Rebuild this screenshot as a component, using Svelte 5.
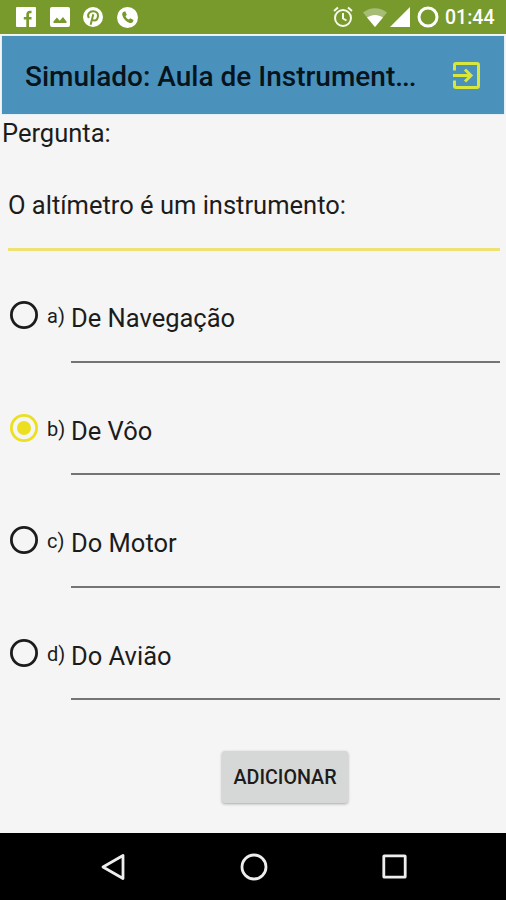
<script lang="ts">
  type Option = {
    key: string;
    text: string;
  };

  const options: Option[] = [
    { key: 'a', text: 'De Navegação' },
    { key: 'b', text: 'De Vôo' },
    { key: 'c', text: 'Do Motor' },
    { key: 'd', text: 'Do Avião' }
  ];

  let selected = $state('b');
</script>

<div class="screen">
  <header class="status">
    <div class="notifications">
      <svg width="20" height="20" viewBox="0 0 20 20" aria-hidden="true">
        <rect width="20" height="20" rx="1" fill="#fff" />
        <path d="M10.300 20v-7.500H7.800V9.900h2.500V7.500c0-2.400 1.300-3.800 3.600-3.800h1.600v2.500h-1.200c-1 0-1.300.4-1.300 1.400v2.300h2.500v2.600H13V20z" fill="#789a2c" />
      </svg>
      <svg width="20" height="20" viewBox="0 0 20 20" aria-hidden="true">
        <rect width="20" height="20" rx="2" fill="#fff" />
        <path d="M3.500 16v-1.500l3.400-4 2.800 3.300 3.300-3.800 3.500 4.500V16z" fill="#789a2c" />
      </svg>
      <svg width="20" height="20" viewBox="0 0 20 20" aria-hidden="true">
        <circle cx="10" cy="10" r="10" fill="#fff" />
        <path d="M10.3 7.2L7.6 17.8M5.9 11C3.8 7.4 6.4 4.2 10.2 4.2c3.1 0 5 2 4.8 4.7-.2 2.9-1.9 4.7-4 4.6-1 0-1.6-.5-2-1.2" fill="none" stroke="#789a2c" stroke-width="2" />
      </svg>
      <svg width="21" height="21" viewBox="0 0 21 21" aria-hidden="true">
        <circle cx="10.5" cy="10.5" r="10.5" fill="#fff" />
        <path d="M6.2 5.1l2-.8 1.6 3.4-1.3 1.5c.7 1.6 1.7 2.6 3.3 3.4l1.5-1.3 3.3 1.7-.8 2c-.6 1-1.8 1.3-3.2.9-3.6-1-6.2-3.8-7.2-7.3-.4-1.5-.2-2.8.8-3.5z" fill="#789a2c" />
      </svg>
    </div>
    <div class="system">
      <svg class="alarm" width="20" height="22" viewBox="0 0 20 22" fill="none" stroke="#f6f9ec" stroke-width="2" aria-hidden="true">
        <circle cx="10" cy="12" r="8" />
        <path d="M1 5l4-3.500M19 5l-4-3.500M10 7v5.500l3.500 2" />
      </svg>
      <svg class="wifi" width="24" height="19" viewBox="0 0 24 19" aria-hidden="true">
        <path d="M0 4.500C7-1.200 17-1.200 24 4.500L12 19z" fill="#fff" opacity="0.35" />
        <path d="M4 9.500c5-3.400 11-3.400 16 0L12 19z" fill="#fff" />
      </svg>
      <svg class="signal" width="20" height="20" viewBox="0 0 20 20" aria-hidden="true">
        <path d="M20 0v20H0z" fill="#fff" />
      </svg>
      <svg class="battery" width="22" height="22" viewBox="0 0 22 22" aria-hidden="true">
        <circle cx="11" cy="11" r="9" fill="none" stroke="#fff" stroke-width="3" />
      </svg>
      <span class="clock">01:44</span>
    </div>
  </header>

  <div class="toolbar">
    <h1>Simulado: Aula de Instrument<span class="dots">...</span></h1>
    <button class="exit" type="button" aria-label="Sair">
      <svg width="27" height="27" viewBox="0 0 27 27" fill="none" stroke="#d9e63c" stroke-width="3" aria-hidden="true">
        <path d="M1.500 8.500V3q0-1.500 1.500-1.500h21q1.500 0 1.500 1.500v21q0 1.500-1.500 1.500H3q-1.500 0-1.500-1.500v-5.500" />
        <path d="M0 13.500h18M12 7.500l6 6-6 6" />
      </svg>
    </button>
  </div>

  <main>
    <p class="label">Pergunta:</p>
    <p class="question">O altímetro é um instrumento:</p>

    <div class="options" role="radiogroup">
      {#each options as option}
        <div class="option">
          <button
            class="radio"
            class:checked={selected === option.key}
            type="button"
            role="radio"
            aria-checked={selected === option.key}
            aria-label={option.key}
            onclick={() => (selected = option.key)}
          >
            <svg width="28" height="28" viewBox="0 0 28 28" aria-hidden="true">
              <circle cx="14" cy="14" r="12.600" fill="none" stroke="currentColor" stroke-width="2.800" />
              {#if selected === option.key}
                <circle cx="14" cy="14" r="7" fill="currentColor" />
              {/if}
            </svg>
          </button>
          <span class="key">{option.key})</span>
          <span class="answer">{option.text}</span>
        </div>
      {/each}
    </div>

    <button class="add" type="button">ADICIONAR</button>
  </main>

  <nav>
    <svg width="24" height="28" viewBox="0 0 24 28" aria-hidden="true">
      <path d="M22 2.500v23L2 14z" />
    </svg>
    <svg width="28" height="28" viewBox="0 0 28 28" aria-hidden="true">
      <circle cx="14" cy="14" r="12" />
    </svg>
    <svg width="25" height="25" viewBox="0 0 25 25" aria-hidden="true">
      <rect x="1.800" y="1.800" width="21.400" height="21.400" rx="0.500" />
    </svg>
  </nav>
</div>

<style>
  .screen {
    width: 506px;
    height: 900px;
    display: flex;
    flex-direction: column;
    overflow: hidden;
    background: #f5f5f5;
    color: #1c1c1c;
    font-family: Roboto, 'Liberation Sans', sans-serif;
  }

  h1,
  p {
    margin: 0;
    font-weight: 400;
    white-space: nowrap;
  }

  button {
    padding: 0;
    border: 0;
    background: none;
    font-family: inherit;
  }

  svg {
    display: block;
    flex: none;
  }

  .status {
    flex: none;
    height: 34px;
    box-sizing: border-box;
    padding: 0 10px 0 16px;
    display: flex;
    justify-content: space-between;
    background: #789a2c;
  }

  .notifications,
  .system {
    display: flex;
    align-items: center;
  }

  .notifications {
    gap: 13.5px;
  }

  .alarm {
    margin-right: 1px;
  }

  .wifi {
    margin-left: 9px;
  }

  .signal {
    margin-left: 3px;
  }

  .battery {
    margin-left: 7px;
  }

  .clock {
    width: 51px;
    margin-left: 6px;
    padding-top: 2px;
    color: #fff;
    font-size: 19.5px;
    font-weight: 500;
    line-height: 34px;
    white-space: nowrap;
  }

  .toolbar {
    flex: none;
    height: 78px;
    margin: 2px 2px 0 2px;
    box-sizing: border-box;
    padding: 0 24px 0 23px;
    display: flex;
    align-items: center;
    justify-content: space-between;
    background: #4a92bc;
    box-shadow: 0 0 0 1px #e3f0f6;
  }

  h1 {
    color: #07141c;
    font-size: 28px;
    font-weight: 500;
    line-height: 32px;
    padding-top: 3px;
  }

  .dots {
    letter-spacing: -1px;
  }

  main {
    flex: 1;
    display: flex;
    flex-direction: column;
  }

  .label {
    padding-left: 2px;
    font-size: 25.5px;
    line-height: 30px;
    margin-top: 4px;
  }

  .question {
    height: 58px;
    margin: 42px 6px 0 8px;
    border-bottom: 3px solid #eee272;
    font-size: 25.5px;
    line-height: 30px;
  }

  .options {
    display: flex;
    flex-direction: column;
    margin-top: 52px;
  }

  .option {
    height: 112.5px;
    padding: 0 6px 0 10px;
    display: flex;
    align-items: flex-start;
  }

  .radio {
    margin-top: -2px;
    color: #1c1c1c;
  }

  .radio.checked {
    color: #ecdf20;
  }

  .key {
    width: 24px;
    margin-left: 9px;
    font-size: 20px;
    line-height: 26px;
  }

  .answer {
    flex: 1;
    height: 57.5px;
    border-bottom: 2px solid #747474;
    font-size: 25.5px;
    line-height: 31px;
  }

  .add {
    width: 126px;
    height: 52px;
    margin: -2px 0 0 222px;
    border-radius: 3px;
    background: #d6d8d7;
    box-shadow: 0 1px 3px rgba(0, 0, 0, 0.32);
    color: #1c1c1c;
    font-size: 19.7px;
    font-weight: 500;
  }

  nav {
    flex: none;
    height: 67px;
    box-sizing: border-box;
    padding: 0 99px 0 101px;
    display: flex;
    align-items: center;
    justify-content: space-between;
    background: #000;
  }

  nav svg {
    fill: none;
    stroke: #eee;
    stroke-width: 2.8;
    stroke-linejoin: round;
  }
</style>
